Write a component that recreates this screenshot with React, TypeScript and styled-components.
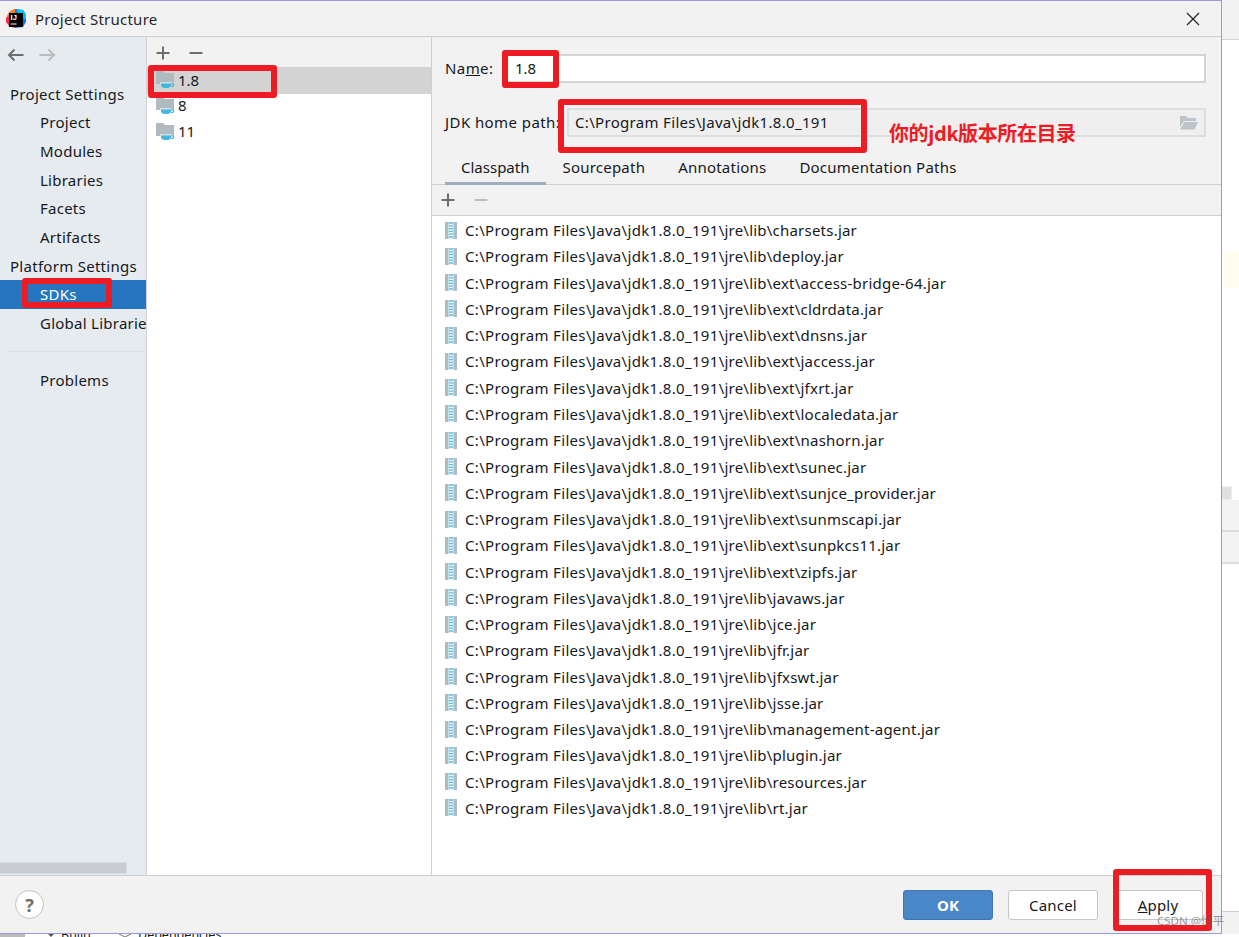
import React from "react";
import styled, { createGlobalStyle } from "styled-components";

const Global = createGlobalStyle`
  html, body { margin: 0; padding: 0; background: #fff; }
  body { font-family: "Noto Sans", "Noto Sans CJK SC", sans-serif; font-size: 15px; color: #16181c; overflow: hidden; }
`;

const Page = styled.div`
  position: relative;
  width: 1239px;
  height: 937px;
  overflow: hidden;
  display: grid;
  grid-template-columns: 1222px 17px;
  grid-template-rows: 934px 3px;
`;

const Dialog = styled.div`
  box-sizing: border-box;
  display: flex;
  flex-direction: column;
  height: 934px;
  background: #f2f2f2;
  border-top: 1px solid #9a9ad8;
  border-right: 1px solid #9a9ad8;
  border-bottom: 1px solid #9a9ad8;
`;

const TitleBar = styled.header`
  box-sizing: border-box;
  height: 36px;
  flex: none;
  display: flex;
  align-items: center;
  padding: 0 21px 0 6px;
  gap: 9px;
  border-bottom: 1px solid #cfcfcf;
`;
const TitleText = styled.span`
  flex: 1;
  font-size: 15px;
  letter-spacing: 0.25px;
  color: #26282c;
`;

const Body = styled.div`
  flex: 1;
  min-height: 0;
  display: grid;
  grid-template-columns: 147px 285px 1fr;
  background: #fff;
`;

const Sidebar = styled.nav`
  position: relative;
  box-sizing: border-box;
  background: #e6ebf0;
  border-right: 1px solid #cfd2d6;
  overflow: hidden;
  white-space: nowrap;
  display: flex;
  flex-direction: column;
  letter-spacing: 0.25px;
`;
const HistoryBar = styled.div`
  height: 42.2px;
  flex: none;
  display: flex;
  align-items: center;
  gap: 15px;
  padding: 0 0 6px 7px;
  box-sizing: border-box;
`;
const NavItem = styled.div<{ $head?: boolean; $sel?: boolean }>`
  height: 28.7px;
  flex: none;
  display: flex;
  align-items: center;
  padding-left: ${(p) => (p.$head ? "10px" : "40px")};
  letter-spacing: ${(p) => (p.$head ? "0.28px" : "inherit")};
  background: ${(p) => (p.$sel ? "#2675bf" : "transparent")};
  color: ${(p) => (p.$sel ? "#fff" : "inherit")};
`;
const NavRule = styled.hr`
  margin: 13.5px 0 13.6px 8px;
  border: 0;
  height: 1px;
  background: #dcdfe3;
  flex: none;
`;
const SideScroll = styled.div`
  position: absolute;
  left: 0;
  bottom: 1px;
  width: 127px;
  height: 12px;
  box-sizing: border-box;
  background: #c9cdd2;
  border: 1px solid #d8dbdf;
  border-left: 0;
`;

const Middle = styled.div`
  box-sizing: border-box;
  border-right: 1px solid #cfcfcf;
  background: #fff;
  display: flex;
  flex-direction: column;
`;
const ToolBar = styled.div<{ $h: number; $top?: number; $line?: boolean }>`
  box-sizing: border-box;
  height: ${(p) => p.$h}px;
  flex: none;
  display: flex;
  align-items: center;
  gap: 19px;
  padding-left: 9px;
  padding-top: ${(p) => p.$top ?? 0}px;
  background: #f2f2f2;
  border-bottom: ${(p) => (p.$line ? "1px solid #cfcfcf" : "0")};
`;
const SdkRow = styled.div<{ $sel?: boolean }>`
  height: ${(p) => (p.$sel ? "27px" : "25.6px")};
  box-sizing: border-box;
  display: flex;
  align-items: center;
  padding-left: 9px;
  padding-bottom: ${(p) => (p.$sel ? "1.4px" : "0")};
  margin-bottom: ${(p) => (p.$sel ? "-1.4px" : "0")};
  gap: 3px;
  background: ${(p) => (p.$sel ? "#d3d3d3" : "transparent")};
`;

const Right = styled.div`
  display: flex;
  flex-direction: column;
  min-width: 0;
`;
const Form = styled.div`
  box-sizing: border-box;
  flex: none;
  background: #f2f2f2;
  padding: 17px 15px 0 13px;
  display: flex;
  flex-direction: column;
  gap: 25px;
  height: 100px;
`;
const FormRow = styled.div`
  display: flex;
  align-items: center;
  height: 29px;
  flex: none;
`;
const Label = styled.label<{ $w: number }>`
  width: ${(p) => p.$w}px;
  flex: none;
  white-space: nowrap;
  letter-spacing: 0.42px;
  margin-top: -2px;
`;
const Field = styled.div<{ $off?: boolean }>`
  position: relative;
  box-sizing: border-box;
  flex: 1;
  height: 29px;
  display: flex;
  align-items: center;
  padding-left: ${(p) => (p.$off ? "6px" : "10px")};
  padding-bottom: 2px;
  background: ${(p) => (p.$off ? "#efefef" : "#fff")};
  border: 2px solid ${(p) => (p.$off ? "#dedede" : "#d4d4d4")};
  justify-content: space-between;
`;
const FolderButton = styled.span`
  display: flex;
  padding: 2px 6px 0 0;
`;
const Tabs = styled.div`
  flex: none;
  height: 48px;
  box-sizing: border-box;
  background: #f2f2f2;
  padding-left: 12.5px;
  display: flex;
  align-items: flex-end;
  border-bottom: 1px solid #cfcfcf;
`;
const Tab = styled.div<{ $on?: boolean }>`
  box-sizing: border-box;
  height: 34px;
  padding: 1px 16.5px 0;
  display: flex;
  align-items: center;
  margin-bottom: -1px;
  letter-spacing: ${(p) => (p.$on ? "0" : "0.22px")};
  border-bottom: 3px solid ${(p) => (p.$on ? "#a0adc0" : "transparent")};
  white-space: nowrap;
`;
const JarList = styled.div`
  flex: 1;
  background: #fff;
  padding-top: 1px;
  display: grid;
  grid-auto-rows: 26.27px;
`;
const JarRow = styled.div`
  display: flex;
  align-items: center;
  padding-left: 13px;
  gap: 8px;
  white-space: nowrap;
  letter-spacing: 0.22px;
`;
const PathText = styled.span`
  letter-spacing: 0.32px;
`;

const Footer = styled.footer`
  box-sizing: border-box;
  flex: none;
  height: 58px;
  border-top: 1px solid #cfcfcf;
  display: flex;
  align-items: center;
  padding: 0 18px 0 15px;
  gap: 15px;
`;
const Help = styled.div`
  box-sizing: border-box;
  width: 29px;
  height: 29px;
  border-radius: 50%;
  background: #fff;
  border: 1px solid #c4c4c4;
  color: #6e6e6e;
  font-weight: 700;
  font-size: 18px;
  display: flex;
  align-items: center;
  justify-content: center;
  margin-right: auto;
`;
const Button = styled.button<{ $primary?: boolean }>`
  box-sizing: border-box;
  width: 90px;
  height: 30px;
  padding: 0;
  border-radius: 3px;
  font: inherit;
  letter-spacing: 0.2px;
  font-weight: ${(p) => (p.$primary ? 700 : 400)};
  color: ${(p) => (p.$primary ? "#fff" : "inherit")};
  background: ${(p) => (p.$primary ? "#4a87c8" : "#fff")};
  border: 1px solid ${(p) => (p.$primary ? "#3f78b5" : "#c6c6c6")};
`;
const Mn = styled.span`
  text-decoration: underline;
`;

const Strip = styled.aside`
  display: flex;
  flex-direction: column;
  background: #fff;
`;
const StripTop = styled.div`
  height: 39px;
  flex: none;
  background: #f2f2f2;
  border-bottom: 1px solid #d4d4d4;
`;
const StripNote = styled.div`
  margin: 211px 0 0 1px;
  height: 37px;
  flex: none;
  background: #fffbee;
`;
const StripThumb = styled.div`
  margin-top: 198px;
  width: 9px;
  height: 12px;
  flex: none;
  background: #e0e0e0;
  border: 1px solid #eee;
  border-left: 0;
  box-sizing: content-box;
`;
const StripPanel = styled.div`
  height: 30px;
  flex: none;
  background: #f3f3f3;
  border-bottom: 2px solid #dcdcdc;
`;
const StripGap = styled.div`
  flex: 1;
`;
const StripFoot = styled.div`
  height: 22px;
  flex: none;
  background: #f2f2f2;
  border-top: 1px solid #cfcfcf;
`;
const Under = styled.div`
  grid-column: 1 / 3;
  height: 3px;
  overflow: hidden;
  display: flex;
  font-size: 12.5px;
  line-height: 15px;
  background: #fff;
`;
const UnderEnd = styled.div`
  width: 25px;
  flex: none;
  background: #bbb;
`;
const UnderGlyph = styled.svg<{ $l: number }>`
  margin-left: ${(p) => p.$l}px;
  flex: none;
`;
const UnderText = styled.span`
  margin-left: 7px;
  margin-top: -7px;
  white-space: nowrap;
`;

const Mark = styled.div<{ $x: number; $y: number; $w: number; $h: number }>`
  position: absolute;
  box-sizing: border-box;
  left: ${(p) => p.$x}px;
  top: ${(p) => p.$y}px;
  width: ${(p) => p.$w}px;
  height: ${(p) => p.$h}px;
  border: 6px solid #ed1c24;
  border-radius: 3px;
  pointer-events: none;
`;
const Note = styled.div`
  position: absolute;
  left: 889px;
  top: 118px;
  font-family: "Noto Sans CJK SC", sans-serif;
  font-weight: 700;
  font-size: 20px;
  letter-spacing: -0.4px;
  line-height: 30px;
  color: #ed1c24;
  white-space: nowrap;
`;
const Watermark = styled.div`
  position: absolute;
  left: 1157px;
  top: 913px;
  font-size: 11.5px;
  line-height: 16px;
  font-family: "Noto Sans", "Noto Sans CJK SC", sans-serif;
  color: rgba(90, 90, 90, 0.6);
  white-space: nowrap;
`;

const Logo = () => (
  <svg width="20" height="20" viewBox="0 0 20 20">
    <polygon points="0,9 3,3 8,0 13,1 13,8 5,10" fill="#fc801d" />
    <polygon points="0,9 6,6 9,19 3,17 0,13" fill="#fe2857" />
    <polygon points="9,0 17,1 20,6 20,13 17,18 9,19" fill="#087cfa" />
    <polygon points="11,0 17,1 20,5 20,10 12,8" fill="#07c3f2" />
    <rect x="3" y="4" width="14" height="14" fill="#000" />
    <text x="4.6" y="11" fontSize="7.5" fontWeight="700" fill="#fff" fontFamily="Liberation Sans">IJ</text>
    <rect x="4.6" y="14.5" width="6" height="1" fill="#fff" />
  </svg>
);

const Arrow = ({ color, flip }: { color: string; flip?: boolean }) => (
  <svg width="17" height="14" viewBox="0 0 17 14" fill="none" stroke={color} strokeWidth="2" style={flip ? { transform: "scaleX(-1)" } : undefined}>
    <path d="M16.5 7H2M7.5 1.5 2 7l5.5 5.5" />
  </svg>
);

const Plus = () => (
  <svg width="14" height="14" viewBox="0 0 14 14" fill="#6e6e6e">
    <rect x="0.5" y="6" width="13" height="2" />
    <rect x="6" y="0.5" width="2" height="13" />
  </svg>
);
const Minus = ({ light }: { light?: boolean }) => (
  <svg width="14" height="14" viewBox="0 0 14 14" fill={light ? "#bcbcbc" : "#6e6e6e"}>
    <rect x="0.5" y="6" width="13" height="2" />
  </svg>
);

const SdkIcon = () => (
  <svg width="19" height="19" viewBox="0 0 19 19">
    <path d="M0 1h7l2 2h9v11H0z" fill="#afbac1" />
    <path d="M4 12.5h12v1H4z" fill="#fff" />
    <path d="M5 13.5h10v1.5c0 1.6-1.6 3-3.5 3h-3C6.6 18 5 16.6 5 15z" fill="#40b6e0" />
    <path d="M15 14h1.6c1.5 0 1.5 2.4 0 2.4H15" fill="none" stroke="#40b6e0" strokeWidth="1.2" />
  </svg>
);

const JarIcon = () => (
  <svg width="12" height="17" viewBox="0 0 12 17">
    <rect width="12" height="17" fill="#aebbc3" />
    <rect x="3.5" width="5" height="17" fill="#e8f6fb" />
    <path d="M4 1h4M4 3.8h4M4 6.6h4M4 9.4h4M4 12.2h4M4 15h4" stroke="#40b6e0" strokeWidth="1.3" opacity="0.85" />
  </svg>
);

const OpenFolder = () => (
  <svg width="18" height="15" viewBox="0 0 18 15">
    <path d="M0 1h6l2 2h8v3H4L0 12z" fill="#bcc4c9" />
    <path d="M4.5 7H18l-3.5 7.5H0z" fill="#bcc4c9" />
  </svg>
);

const Close = () => (
  <svg width="14" height="14" viewBox="0 0 14 14" stroke="#222" strokeWidth="1.2">
    <path d="M1 1l12 12M13 1 1 13" />
  </svg>
);

const P = "C:\\Program Files\\Java\\jdk1.8.0_191";
const jars = [
  "jre\\lib\\charsets.jar", "jre\\lib\\deploy.jar", "jre\\lib\\ext\\access-bridge-64.jar",
  "jre\\lib\\ext\\cldrdata.jar", "jre\\lib\\ext\\dnsns.jar", "jre\\lib\\ext\\jaccess.jar",
  "jre\\lib\\ext\\jfxrt.jar", "jre\\lib\\ext\\localedata.jar", "jre\\lib\\ext\\nashorn.jar",
  "jre\\lib\\ext\\sunec.jar", "jre\\lib\\ext\\sunjce_provider.jar", "jre\\lib\\ext\\sunmscapi.jar",
  "jre\\lib\\ext\\sunpkcs11.jar", "jre\\lib\\ext\\zipfs.jar", "jre\\lib\\javaws.jar",
  "jre\\lib\\jce.jar", "jre\\lib\\jfr.jar", "jre\\lib\\jfxswt.jar", "jre\\lib\\jsse.jar",
  "jre\\lib\\management-agent.jar", "jre\\lib\\plugin.jar", "jre\\lib\\resources.jar", "jre\\lib\\rt.jar",
];

export default function App() {
  return (
    <Page>
      <Global />
      <Dialog>
        <TitleBar>
          <Logo />
          <TitleText>Project Structure</TitleText>
          <Close />
        </TitleBar>
        <Body>
          <Sidebar>
            <HistoryBar>
              <Arrow color="#6e6e6e" />
              <Arrow color="#bcbcbc" flip />
            </HistoryBar>
            <NavItem $head>Project Settings</NavItem>
            <NavItem>Project</NavItem>
            <NavItem>Modules</NavItem>
            <NavItem>Libraries</NavItem>
            <NavItem>Facets</NavItem>
            <NavItem>Artifacts</NavItem>
            <NavItem $head>Platform Settings</NavItem>
            <NavItem $sel>SDKs</NavItem>
            <NavItem>Global Libraries</NavItem>
            <NavRule />
            <NavItem>Problems</NavItem>
            <SideScroll />
          </Sidebar>
          <Middle>
            <ToolBar $h={30} $top={2}>
              <Plus />
              <Minus />
            </ToolBar>
            <SdkRow $sel><SdkIcon />1.8</SdkRow>
            <SdkRow><SdkIcon />8</SdkRow>
            <SdkRow><SdkIcon />11</SdkRow>
          </Middle>
          <Right>
            <Form>
              <FormRow>
                <Label $w={58}>Na<Mn>m</Mn>e:</Label>
                <Field>1.8</Field>
              </FormRow>
              <FormRow>
                <Label $w={122}>JDK home path:</Label>
                <Field $off>
                  <PathText>{P}</PathText>
                  <FolderButton><OpenFolder /></FolderButton>
                </Field>
              </FormRow>
            </Form>
            <Tabs>
              <Tab $on>Classpath</Tab>
              <Tab>Sourcepath</Tab>
              <Tab>Annotations</Tab>
              <Tab>Documentation Paths</Tab>
            </Tabs>
            <ToolBar $h={31} $line>
              <Plus />
              <Minus light />
            </ToolBar>
            <JarList>
              {jars.map((j) => (
                <JarRow key={j}>
                  <JarIcon />
                  <span><PathText>{P}</PathText>\{j}</span>
                </JarRow>
              ))}
            </JarList>
          </Right>
        </Body>
        <Footer>
          <Help>?</Help>
          <Button $primary>OK</Button>
          <Button>Cancel</Button>
          <Button><Mn>A</Mn>pply</Button>
        </Footer>
      </Dialog>
      <Strip>
        <StripTop />
        <StripNote />
        <StripThumb />
        <StripPanel />
        <StripPanel />
        <StripGap />
        <StripFoot />
      </Strip>
      <Under>
        <UnderEnd />
        <UnderGlyph $l={23} width="6" height="3" viewBox="0 0 6 3"><path d="M0 0h6L3 3z" fill="#555" /></UnderGlyph>
        <UnderText>Build</UnderText>
        <UnderGlyph $l={28} width="12" height="3" viewBox="0 0 12 3" fill="none" stroke="#777"><path d="M0 0l6 3 6-3" /></UnderGlyph>
        <UnderText>Dependencies</UnderText>
      </Under>
      <Mark $x={148} $y={65} $w={129} $h={33} />
      <Mark $x={502} $y={50} $w={57} $h={38} />
      <Mark $x={558} $y={99} $w={309} $h={54} />
      <Mark $x={22} $y={278} $w={90} $h={30} />
      <Mark $x={1113} $y={869} $w={99} $h={62} />
      <Note>你的jdk版本所在目录</Note>
      <Watermark>CSDN @俭平</Watermark>
    </Page>
  );
}
